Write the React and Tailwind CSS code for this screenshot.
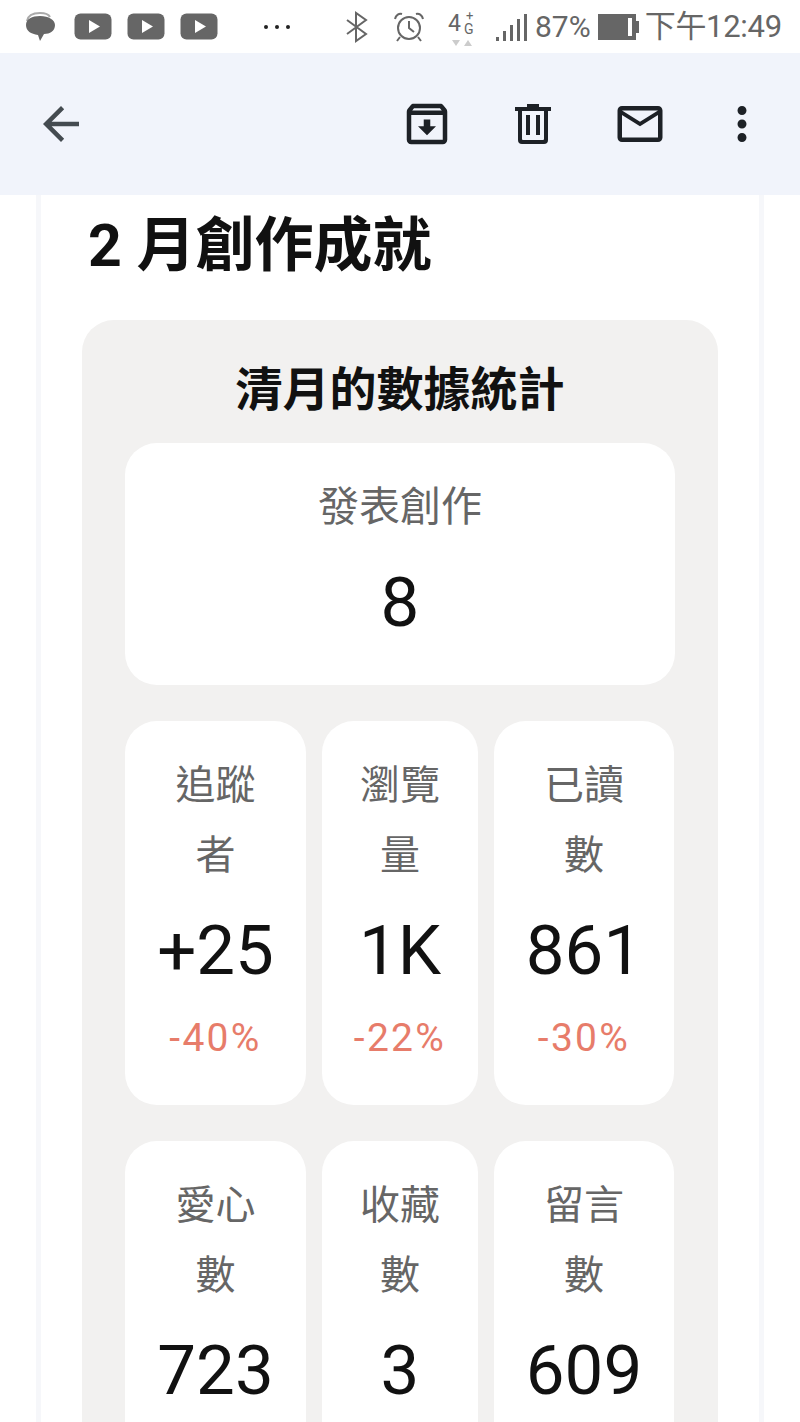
import { MdArrowBack, MdOutlineArchive, MdMailOutline, MdMoreVert } from "react-icons/md";

const fontStack = { fontFamily: '"Roboto", "Noto Sans CJK TC", sans-serif' };

function PlayIcon({ className }) {
  return (
    <svg width="38" height="27" viewBox="0 0 38 27" className={className}>
      <rect x="0.5" y="0.5" width="37" height="26" rx="6" fill="#666" />
      <path d="M15 7 L26 13.5 L15 20 Z" fill="#fff" />
    </svg>
  );
}

function TrashIcon({ className }) {
  return (
    <svg width="36" height="40" viewBox="0 0 36 40" className={className} fill="#1d2126">
      <path d="M12 0 H24 V3 H36 V7 H0 V3 H12 Z" />
      <path d="M3 7 H7 V35 a1 1 0 0 0 1 1 H28 a1 1 0 0 0 1 -1 V7 H33 V36 a4 4 0 0 1 -4 4 H7 a4 4 0 0 1 -4 -4 Z" />
      <rect x="11" y="11" width="4" height="20" />
      <rect x="21" y="11" width="4" height="20" />
    </svg>
  );
}

function StatusBar() {
  return (
    <div className="flex h-[53px] items-center bg-white text-[#666]">
      <svg width="32" height="30" viewBox="0 0 32 30" className="ml-[24px]">
        <path d="M3 9 C4 3 9 1 16 1 C22 1 25 3 26 5" fill="none" stroke="#aaa" strokeWidth="2" />
        <path d="M2 13 C2 7 8 4 16 4 C25 4 31 8 31 13 C31 19 26 22 20 22 L16 29 L14 23 C7 22 2 19 2 13 Z" fill="#666" />
      </svg>
      <PlayIcon className="ml-[18px]" />
      <PlayIcon className="ml-[15px]" />
      <PlayIcon className="ml-[15px]" />
      <div className="ml-[46px] flex gap-[7px]">
        <span className="h-[4px] w-[4px] rounded-full bg-[#222]" />
        <span className="h-[4px] w-[4px] rounded-full bg-[#222]" />
        <span className="h-[4px] w-[4px] rounded-full bg-[#222]" />
      </div>
      <svg width="22" height="32" viewBox="0 0 22 32" className="ml-[56px]" fill="none" stroke="#666" strokeWidth="2">
        <path d="M1 9 L20 23 L10 30 L10 2 L20 9 L1 23" />
      </svg>
      <svg width="32" height="32" viewBox="0 0 32 32" className="ml-[25px]" fill="none" stroke="#666" strokeWidth="2">
        <circle cx="16" cy="17" r="11" />
        <path d="M16 10 V17 L21 21 M2 8 C3 4 6 2 9 3 M30 8 C29 4 26 2 23 3 M7 26 L4 30 M25 26 L28 30" />
      </svg>
      <div className="relative ml-[23px] h-[36px] w-[28px] text-[#666]">
        <span className="absolute left-0 top-[2px] text-[23px] leading-[26px]">4</span>
        <span className="absolute left-[16px] top-[12px] text-[14px] leading-[16px]">G</span>
        <span className="absolute left-[18px] top-[1px] text-[13px] leading-[12px]">+</span>
        <span className="absolute left-[4px] top-[31px] h-0 w-0 border-x-[4px] border-t-[6px] border-x-transparent border-t-[#ccc]" />
        <span className="absolute left-[16px] top-[31px] h-0 w-0 border-x-[4px] border-b-[6px] border-x-transparent border-b-[#ccc]" />
      </div>
      <div className="ml-[20px] flex h-[28px] items-end gap-[4px]">
        <span className="h-[4px] w-[3px] bg-[#666]" />
        <span className="h-[10px] w-[3px] bg-[#666]" />
        <span className="h-[16px] w-[3px] bg-[#666]" />
        <span className="h-[22px] w-[3px] bg-[#666]" />
        <span className="h-[27px] w-[3px] bg-[#666]" />
      </div>
      <span className="ml-[8px] text-[30px] leading-none">87%</span>
      <div className="ml-[7px] flex items-center">
        <div className="h-[26px] w-[38px] border-2 border-[#666] bg-[#666] p-[2px]">
          <div className="h-full w-full border-r-[4px] border-white" />
        </div>
        <div className="h-[12px] w-[3px] bg-[#666]" />
      </div>
      <span className="ml-[6px] text-[31px] leading-none tracking-[-0.3px]">下午12:49</span>
    </div>
  );
}

function Toolbar() {
  return (
    <div className="flex h-[142px] items-center bg-[#f1f4fb] text-[54px] text-[#1d2126]">
      <MdArrowBack className="ml-[34px] text-[#444b50]" />
      <MdOutlineArchive className="ml-[312px]" />
      <TrashIcon className="ml-[61px]" />
      <MdMailOutline className="ml-[62px]" />
      <MdMoreVert className="ml-[48px]" />
    </div>
  );
}

function StatCard({ label, value, change }) {
  return (
    <div className="flex flex-col items-center rounded-[32px] bg-white pt-[30px] pb-[43px]">
      <div className="text-center text-[40px] leading-[70px] text-[#666]">
        {label.map((line) => (
          <div key={line}>{line}</div>
        ))}
      </div>
      <div className="mt-[22px] text-[69px] leading-[76px] text-[#111]">{value}</div>
      {change && <div className="mt-[25px] text-[39px] leading-[48px] tracking-[2.3px] text-[#e77c6a]">{change}</div>}
    </div>
  );
}

export default function App() {
  return (
    <div className="h-[1422px] w-[800px] overflow-hidden bg-white" style={fontStack}>
      <StatusBar />
      <Toolbar />
      <div className="mx-[36px] h-[1227px] border-x-[5px] border-[#f6f7fa] bg-white pt-[18px]">
        <h1 className="ml-[47px] text-[59px] font-bold leading-[66px] text-[#111]">2 月創作成就</h1>
        <div className="mx-[41px] mt-[41px] rounded-[32px] bg-[#f2f1f0] px-[43px] pt-[40px]">
          <h2 className="text-center text-[47px] font-bold leading-[60px] text-[#111]">清月的數據統計</h2>
          <div className="mt-[23px] flex h-[242px] flex-col items-center rounded-[32px] bg-white pt-[29px]">
            <div className="text-[41px] leading-[70px] text-[#666]">發表創作</div>
            <div className="mt-[23px] text-[69px] leading-[76px] text-[#111]">8</div>
          </div>
          <div className="mt-[36px] grid grid-cols-[181px_156px_180px] gap-x-[16px] gap-y-[36px]">
            <StatCard label={["追蹤", "者"]} value="+25" change="-40%" />
            <StatCard label={["瀏覽", "量"]} value="1K" change="-22%" />
            <StatCard label={["已讀", "數"]} value="861" change="-30%" />
            <StatCard label={["愛心", "數"]} value="723" />
            <StatCard label={["收藏", "數"]} value="3" />
            <StatCard label={["留言", "數"]} value="609" />
          </div>
        </div>
      </div>
    </div>
  );
}
